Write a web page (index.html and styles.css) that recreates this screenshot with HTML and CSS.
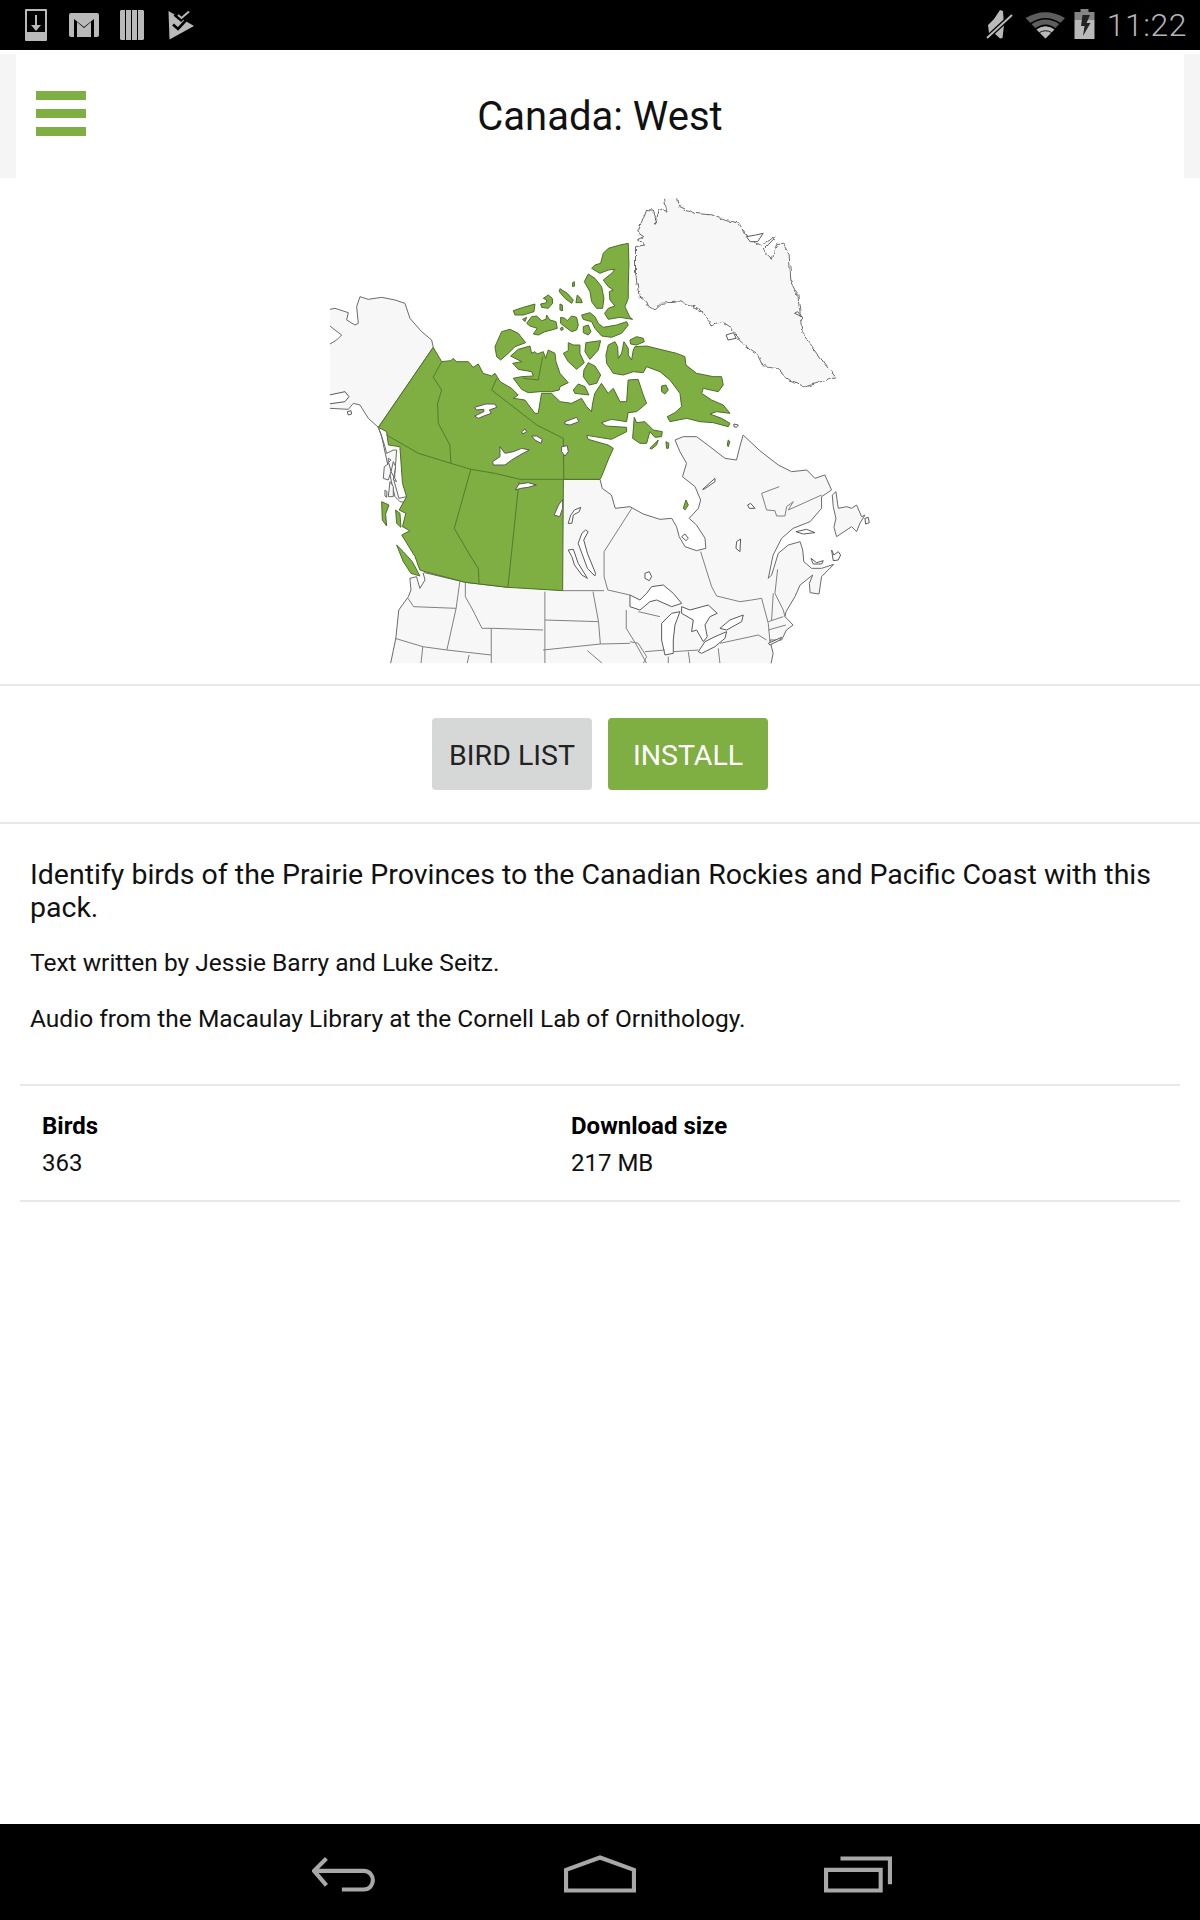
FILE: index.html
```html
<!DOCTYPE html>
<html lang="en">
<head>
<meta charset="utf-8">
<title>Canada: West</title>
<link rel="stylesheet" href="styles.css">
</head>
<body>
<div class="status">
  <div class="status-left">
    <svg class="i-download" viewBox="0 0 22 32"><path class="ico" fill-rule="evenodd" d="M0 1a1 1 0 0 1 1-1h20a1 1 0 0 1 1 1v30a1 1 0 0 1-1 1H1a1 1 0 0 1-1-1zM2 2v21h18V2z"/><path class="ico" d="M10 6h2v10h4l-5 6-5-6h4z"/></svg>
    <svg class="i-mail" viewBox="0 0 30 24"><path class="ico" d="M2 0h26a2 2 0 0 1 2 2v20a2 2 0 0 1-2 2h-3V6L15 14 5 6v18H2a2 2 0 0 1-2-2V2a2 2 0 0 1 2-2z"/><path class="ico" d="M8 9l7 6 7-6v15H8z"/></svg>
    <svg class="i-bars" viewBox="0 0 24 30"><path class="ico" d="M1 0h4v30H1l-1-1V1zM6 0h5v30H6zM12 0h5v30h-5zM18 0h5l1 1v28l-1 1h-5z"/></svg>
    <svg class="i-play" viewBox="8 3 28 34"><path class="ico" d="M8.500 6L34 21 9.500 34.500z"/><path class="ico-gap" d="M15 9L21 14 31 4"/><path class="ico-stroke" d="M18 10L21.500 13 29 6.500"/><path class="ico-check" d="M13 19.500L18 24 28.500 12.500"/></svg>
  </div>
  <div class="status-right">
    <svg class="i-sys" viewBox="0 0 120 40">
      <path class="ico" d="M9 20L15 14 21 5 24 6 25 20 23.500 33 21 33.500 15 28 10 28z"/>
      <path class="ico-gap" d="M8 33L33 10"/>
      <path class="ico-stroke" d="M8 33L33 10"/>
      <path class="wifi-dim" d="M46.500 13Q66.500 1.500 86 13L66.500 33.500z"/>
      <path class="wifi-gap" d="M52 18.500Q66.500 9 81 18.500M56.500 24Q66.500 16.500 76.500 24"/>
      <path class="ico" d="M57.500 24.500Q66.500 18.500 75.500 24.500L66.500 33.500z"/>
      <path class="wifi-thin" d="M60.500 27.500Q66.500 24 72.500 27.500"/>
      <path class="batt-top" d="M101.500 4h8v3h6v8h-20v-8h6z"/>
      <path class="ico" d="M95.500 15h20v19h-20z"/>
      <path class="bolt" d="M103.500 10L111 10 107.500 18 111.500 18 104 31 105.500 21 102 21z"/>
    </svg>
    <span class="time">11:22</span>
  </div>
</div>

<main class="main">
  <header class="header">
    <div class="header-inner">
      <div class="burger"><span></span><span></span><span></span></div>
      <h1 class="title">Canada: West</h1>
    </div>
  </header>

  <figure class="map-wrap">
    <svg class="map" viewBox="0 0 1568 1500" preserveAspectRatio="none">
      <defs>
        <clipPath id="mapclip"><rect x="54" y="55" width="1480" height="1395"/></clipPath>
        <filter id="rough" x="-5%" y="-5%" width="110%" height="110%" color-interpolation-filters="sRGB">
          <feTurbulence type="fractalNoise" baseFrequency="0.05" numOctaves="2" seed="4"/>
          <feDisplacementMap in="SourceGraphic" scale="16" xChannelSelector="R" yChannelSelector="G"/>
        </filter>
      </defs>
      <g clip-path="url(#mapclip)">
        <!-- Greenland -->
        <path class="land" filter="url(#rough)" d="M955 35L965 95 945 85 935 130 925 90 910 88 895 130 885 155 905 170 885 180 905 195 880 200 880 280 890 350 910 365 915 378 930 390 950 370 1000 365 1030 375 1060 395 1085 435 1110 425 1145 450 1160 480 1190 510 1210 525 1225 560 1260 565 1295 600 1310 605 1340 620 1395 600 1420 590 1390 550 1365 510 1330 460 1325 400 1318 340 1300 300 1295 220 1280 190 1262 190 1250 235 1225 210 1260 170 1220 195 1180 170 1160 130 1120 120 1090 105 1040 100 1000 80 990 35z"/>
        <path class="lake" d="M1125 465L1145 458 1152 475 1130 480zM1310 400L1330 410 1318 395zM1180 170L1205 165 1225 160 1210 185 1190 185z"/>

        <!-- Alaska and the coastal fringe -->
        <g transform="matrix(.901 0 0 1 40.500 330)">
          <path class="land" d="M-40 50L15 58 30 55 70 68 65 90 90 105 100 100 95 50 105 20 130 28 170 22 210 30 240 40 255 85 290 125 320 150 325 172 160 412 168 432 180 470 185 490 205 480 215 480 208 575 222 625 245 620 235 470 225 470 260 470 260 640 225 635 210 620 205 600 170 440 160 412 130 385 105 345 85 340 70 358 15 355-40 355-40 162 15 162 35 150 50 135 30 120 15 108-40 108z"/>
          <path class="lake" d="M-10 320L60 305 72 320 60 335-10 345zM67 365L78 362 80 372 70 375z"/>
          <path class="land" d="M190 505L198 510 190 518zM178 530L192 520 198 545 190 570 175 565zM205 515L212 530 205 570 215 575 198 545zM195 575L205 590 205 620 190 620zM180 600L186 605 185 622 180 618z"/>
        </g>

        <!-- USA and eastern Canada -->
        <path class="land" d="M683 898L784 898 790 925 815 945 825 985 865 980 901 1002 946 1018 978 1015 991 1040 998 1070 1014 1100 1045 1112 1070 1105 1068 1075 1045 1035 1025 1015 1050 985 1056 960 1041 920 1007 890 1018 850 1000 815 987 780 1009 770 1045 770 1081 800 1122 835 1153 840 1162 800 1171 765 1216 812 1266 855 1302 875 1343 870 1365 895 1392 885 1410 930 1383 950 1383 985 1352 1025 1306 1045 1275 1075 1252 1125 1239 1195 1248 1185 1266 1120 1293 1095 1325 1085 1332 1110 1335 1145 1356 1165 1383 1165 1416 1153 1383 1190 1376 1242 1352 1238 1350 1210 1359 1185 1325 1215 1311 1250 1287 1295 1284 1310 1306 1335 1288 1350 1275 1380 1243 1380 1252 1420 1243 1470 214 1470 218 1450 232 1375 240 1290 266 1250 273 1230 270 1195 288 1190 297 1225 311 1200 306 1180 310 1178 420 1207 535 1222z"/>
        <g transform="matrix(.901 0 0 1 865 780)">
          <path class="land" d="M607 165L618 155 625 205 650 200 665 205 680 195 695 230 705 225 690 250 680 275 665 260 620 290 612 262 618 235 610 200z"/>
          <path class="lake" d="M705 235L715 232 718 248 707 252zM218 148L255 115 255 125 222 148zM155 290L165 282 175 295 168 302zM353 195L362 190 375 205 358 205zM320 305L332 297 330 335 318 325zM498 275L530 268 555 278 520 282zM543 355L560 368 580 362 575 372 550 372zM605 330L612 345 625 335 632 345 625 360 610 362zM45 400L58 395 65 410 58 422 45 415z"/>
          <path class="lake" d="M0 465L30 480 50 460 65 440 100 435 130 460 155 490 125 500 80 480 60 485 30 510 0 500zM95 550L125 520 150 515 135 555 130 600 130 640 105 645 95 600zM155 500L180 510 235 495 262 520 240 530 225 555 232 590 220 605 200 570 185 575 190 540 155 520zM205 635L225 605 255 590 290 575 285 595 255 620 215 640zM270 565L300 540 340 525 335 545 290 570zM415 610L455 592 450 600 420 615z"/>
          <path class="border" d="M448 140L395 160 410 210 435 212 440 228 465 228 470 200 490 185 475 210 575 165M212 335L245 440 260 468 330 485 365 480 395 475 415 550 420 605M430 460L425 540M415 545L460 530M415 570L468 555M270 610L385 585 410 600M443 388L435 460 460 510 465 530M25 515L90 530M45 635L105 630M130 635L205 630M175 635L180 670M115 650L115 670M265 625L270 670M0 605L25 610 50 650 40 670"/>
          <path class="green" d="M160 205L168 180 175 195 165 210z"/>
        </g>
        <!-- inland borders in the south -->
        <path class="border" d="M870 985L795 1115 795 1190 805 1230 865 1245M683 1232H795M405 1205L395 1285 370 1410M420 1207L420 1250 440 1290 465 1345 495 1345 630 1350M635 1235V1450M635 1320L780 1325M630 1410L785 1392 865 1390M765 1235L780 1325 785 1392M265 1255L280 1280 395 1285M230 1375L305 1400 370 1410 490 1425M305 1400L300 1450M425 1450L430 1425M490 1345V1450M750 1412L790 1450M855 1290V1345L880 1390 910 1450"/>

        <!-- green mainland -->
        <path class="green" d="M333 502L356 545 381 542 387 535 396 545 428 545 441 562 455 552 468 580 491 588 500 580 514 605 545 625 563 645 550 655 581 660 608 700 617 700 626 640 653 640 676 665 707 670 734 655 748 680 761 695 764 670 770 640 788 610 806 640 820 625 838 665 856 665 860 600 887 598 901 645 910 670 883 695 860 698 856 725 815 718 788 728 800 738 856 742 856 755 815 778 748 766 752 778 806 795 820 805 806 840 788 890 784 898 685 898 683 1232 535 1222 420 1207 311 1175 297 1170 284 1130 248 1065 270 1052 250 1040 259 1000 241 990 261 950 250 910 243 800 212 795 207 755 185 742z"/>

        <!-- green islands, traced from the arctic crop -->
        <g transform="matrix(.901 0 0 1 459.500 150)">
          <path class="green" d="M445 40L447 100 445 170 445 205 435 230 450 262 458 268 420 262 385 268 374 250 385 235 405 228 390 210 388 185 400 180 385 170 370 150 395 130 405 118 385 120 360 130 335 115 345 105 362 100 370 70 385 55 420 45z"/>
          <path class="green" d="M325 132L345 145 365 170 372 205 368 235 350 235 335 215 330 185 313 155zM278 158L283 155 284 168 278 170zM240 176L262 190 280 210 275 220 255 205 238 185zM292 195L302 205 307 218 288 218zM190 205L205 195 217 205 218 220 205 235 185 232 182 222 200 218 200 210zM240 222L247 225 248 242 240 240zM100 242L130 232 165 222 162 245 130 255 105 255zM128 268L140 262 135 275zM140 280L155 260 170 258 185 272 198 268 200 255 210 270 228 275 232 295 215 300 195 305 175 315 160 312 172 295 150 288zM242 262L255 265 262 272 275 258 290 262 295 285 290 300 275 305 255 290 242 280zM241 295L248 291 250 298 244 302zM310 290L325 285 333 305 325 315 310 308zM305 255L330 248 345 260 355 280 370 292 410 285 440 275 445 285 425 310 395 322 365 318 345 295 335 275 310 268zM45 350L65 305 90 298 115 310 137 338 105 350 85 370 62 390 50 380zM92 378L115 358 150 348 155 370 165 365 172 372 190 365 197 385 205 360 225 370 228 395 240 430 265 458 240 470 238 480 215 485 180 485 145 488 125 478 100 445 125 440 160 438 155 425 115 418 98 400 125 395zM265 338L280 345 300 345 300 370 313 398 290 418 265 395 250 370 265 362zM318 338L362 332 355 360 330 388 315 365zM325 398L345 408 362 435 350 460 328 465 310 440 312 420zM295 462L315 470 327 495 285 490 280 480z"/>
          <path class="green" d="M378 375L385 345 405 335 413 350 415 385 425 370 432 335 445 355 445 375 455 390 460 360 465 350 500 348 540 358 590 370 615 380 618 405 650 430 700 440 725 440 730 465 715 485 670 475 665 490 695 510 730 525 750 550 710 545 690 552 725 565 750 580 745 590 700 578 660 575 620 565 595 570 570 575 562 560 585 548 605 530 600 490 570 450 540 425 500 410 490 428 460 425 430 435 400 430 380 400z"/>
          <path class="green" d="M450 330L470 320 490 325 493 335 470 345 452 342zM545 468L558 465 565 480 555 492 545 485zM463 562L470 578 495 575 520 600 547 605 545 620 525 622 510 605 500 640 480 640 458 625zM510 655L535 630 530 645 515 657zM558 635L567 640 565 655 560 655zM745 630L750 635 745 650 742 645z"/>
          <path class="lake" d="M762 582L775 585 770 592 762 590z"/>
          <path class="inner" d="M188 380L175 450 130 445"/>
        </g>
        <g transform="matrix(.901 0 0 1 40.500 330)">
          <path class="green" d="M170 635L192 645 182 672 185 708 172 690zM212 660L225 670 228 712 215 700zM215 765L235 785 262 815 285 858 258 850 235 815z"/>
        </g>

        <!-- inner borders -->
        <path class="inner" d="M356 545L333 592 356 630 345 670 347 730 378 795 381 850M207 765L293 820 381 850 435 868 500 880 568 898 685 898M505 595L491 630 613 735 685 775 686 898M435 868L390 1045 432 1125 455 1165 457 1210M565 905L535 1222"/>

        <!-- western lakes -->
        <path class="lake" d="M445 682L475 672 500 672 505 682 485 690 490 700 470 708 455 715 445 708 470 695 470 688 450 690zM555 930L565 912 590 908 612 915 590 922 570 925zM660 1005L672 975 683 958 683 985 675 1010z"/>
        <g transform="matrix(.901 0 0 1 459.500 150)">
          <path class="lake" d="M38 695L60 680 60 650 75 670 100 665 125 655 148 660 120 675 95 690 75 705 40 705zM255 575L290 562 297 575 270 585 255 582zM125 605L135 597 140 605 128 612zM155 618L170 618 187 628 183 640 165 630zM245 650L262 647 265 665 255 678 245 665z"/>
        </g>
        <path class="lake-e" d="M735 1060L745 1050 752 1055 740 1080 750 1120 772 1180 770 1188 750 1165 735 1120 725 1090zM698 1030L705 1005 715 990 732 982 728 995 712 1005 708 1030zM698 1110L712 1108 725 1150 750 1195 735 1185 715 1155 708 1130z"/>
      </g>
    </svg>
  </figure>

  <div class="actions">
    <button class="btn btn-list">BIRD LIST</button>
    <button class="btn btn-install">INSTALL</button>
  </div>

  <section class="desc">
    <p class="lead">Identify birds of the Prairie Provinces to the Canadian Rockies and Pacific Coast with this pack.</p>
    <p class="note">Text written by Jessie Barry and Luke Seitz.</p>
    <p class="note">Audio from the Macaulay Library at the Cornell Lab of Ornithology.</p>
  </section>

  <section class="facts">
    <div class="fact"><strong>Birds</strong><span>363</span></div>
    <div class="fact"><strong>Download size</strong><span>217 MB</span></div>
  </section>
</main>

<nav class="nav">
  <svg class="n-back" viewBox="0 0 64 34"><path class="nav-line" d="M14 2L2 14 14 28M2 14H50C62 14 62 32 50 32H29"/></svg>
  <svg class="n-home" viewBox="0 0 70 36"><path class="nav-line" d="M2 34V14L35 2 68 14V34z"/></svg>
  <svg class="n-recent" viewBox="0 0 66 36"><path class="nav-line" d="M2 14H55V34H2zM16 3H64V28"/></svg>
</nav>
</body>
</html>
```

FILE: styles.css
```css
* { box-sizing: border-box; }
html, body { margin: 0; padding: 0; }
body {
  width: 1200px;
  height: 1920px;
  display: flex;
  flex-direction: column;
  background: #fff;
  color: #111;
  font-family: Roboto, "Noto Sans", sans-serif;
}

.status {
  height: 50px;
  flex: none;
  background: #000;
  display: flex;
  align-items: center;
  justify-content: space-between;
}
.status-left { display: flex; align-items: center; padding-left: 25px; }
.status-right { display: flex; align-items: center; padding-right: 13px; }
.status svg { display: block; flex: none; }
.ico { fill: #b9b9b9; }
.ico-gap { fill: none; stroke: #000; stroke-width: 4.500; }
.ico-stroke { fill: none; stroke: #b9b9b9; stroke-width: 2; }
.ico-check { fill: none; stroke: #000; stroke-width: 2.600; }
.wifi-dim { fill: #5d5d5d; }
.wifi-gap { fill: none; stroke: #000; stroke-width: 1.600; }
.wifi-thin { fill: none; stroke: #111; stroke-width: 1; }
.batt-top { fill: #858585; }
.bolt { fill: #222; }
.i-download { width: 22px; height: 32px; }
.i-mail { width: 30px; height: 24px; margin-left: 22px; }
.i-bars { width: 24px; height: 30px; margin-left: 21px; }
.i-play { width: 28px; height: 34px; margin-left: 24px; }
.i-sys { width: 120px; height: 40px; }
.time { margin-left: 8px; font-size: 32px; font-weight: 300; color: #b4b4b4; line-height: 50px; letter-spacing: 0.5px; }

.main { flex: 1; display: flex; flex-direction: column; }

.header { height: 128px; flex: none; padding-top: 4px; background: linear-gradient(#fff 4px, #f5f5f5 4px); }
.header-inner {
  height: 124px;
  margin: 0 16px;
  background: #fff;
  display: grid;
  grid-template-columns: 1fr auto 1fr;
  align-items: center;
}
.burger { display: flex; flex-direction: column; gap: 9px; padding-left: 20px; margin-top: -6px; }
.burger span { display: block; width: 50px; height: 9px; background: #7fae42; }
.title { grid-column: 2; margin: 0; font-size: 40px; font-weight: 400; color: #111; }

.map-wrap { margin: 0; padding: 2px 0 4px; border-bottom: 2px solid #e8e8e8; }
.map { display: block; width: 580px; height: 500px; margin: 0 auto; }
.land { fill: #f7f7f7; stroke: #6a6a6a; stroke-width: 1; stroke-linejoin: round; vector-effect: non-scaling-stroke; }
.green { fill: #7fae42; stroke: #4d6e28; stroke-width: 1; stroke-linejoin: round; vector-effect: non-scaling-stroke; }
.border { fill: none; stroke: #808080; stroke-width: 1; vector-effect: non-scaling-stroke; }
.inner { fill: none; stroke: #567a2e; stroke-width: 1; vector-effect: non-scaling-stroke; }
.lake, .lake-e { fill: #fff; stroke: #5a5a5a; stroke-width: 1; stroke-linejoin: round; vector-effect: non-scaling-stroke; }

.actions {
  display: flex;
  justify-content: center;
  gap: 16px;
  padding: 32px 0;
  border-bottom: 2px solid #e8e8e8;
}
.btn {
  width: 160px;
  height: 72px;
  border: 0;
  border-radius: 4px;
  font-family: Roboto, sans-serif;
  font-size: 28.500px;
  font-weight: 400;
  padding: 2px 0 0;
}
.btn-list { background: #d6d8d8; color: #222; }
.btn-install { background: #7fae42; color: #fff; }

.desc { padding: 34px 30px 0; height: 260px; }
.lead { margin: 0 0 25px; font-size: 28.500px; line-height: 33px; color: #111; }
.note { margin: 0 0 28px; font-size: 24.500px; line-height: 28px; color: #111; }

.facts {
  margin: 0 20px;
  height: 118px;
  padding: 25px 22px 0;
  border-top: 2px solid #e8e8e8;
  border-bottom: 2px solid #e8e8e8;
  display: grid;
  grid-template-columns: 529px 1fr;
}
.fact { display: flex; flex-direction: column; gap: 7px; font-size: 24px; line-height: 30px; }
.fact strong { font-weight: 700; color: #000; }

.nav {
  height: 96px;
  flex: none;
  background: #000;
  display: flex;
  align-items: center;
  padding: 4px 0 0 312px;
}
.nav svg { display: block; flex: none; }
.nav-line { fill: none; stroke: #a8a8a8; stroke-width: 4; }
.n-back { width: 66px; height: 36px; }
.n-home { width: 72px; height: 38px; margin-left: 186px; }
.n-recent { width: 68px; height: 38px; margin-left: 188px; }
```
